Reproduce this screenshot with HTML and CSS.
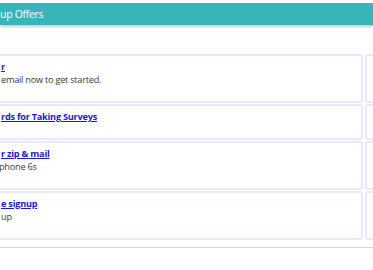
FILE: index.html
```html
<!DOCTYPE html>
<html lang="en">
  <head>
    <meta charset="UTF-8" />
    <meta name="viewport" content="width=device-width, initial-scale=1.0" />
    <title>Signup Offers</title>
    <link rel="stylesheet" href="styles.css">
  </head>
  <body>
    <div class="panel">
      <div class="panel-header">
        <h2>up Offers</h2>
      </div>

      <div class="panel-body">
        <div class="offer-row">
          <div class="offer">
            <a href="#" class="offer-title">r</a>
            <p>email now to get started.</p>
          </div>
          <div class="offer"></div>
        </div>

        <div class="offer-row">
          <div class="offer">
            <a href="#" class="offer-title">rds for Taking Surveys</a>
          </div>
          <div class="offer"></div>
        </div>

        <div class="offer-row">
          <div class="offer">
            <a href="#" class="offer-title">r zip &amp; mail</a>
            <p class="cut">phone 6s</p>
          </div>
          <div class="offer"></div>
        </div>

        <div class="offer-row">
          <div class="offer">
            <a href="#" class="offer-title">e signup</a>
            <p>up</p>
          </div>
          <div class="offer"></div>
        </div>
      </div>
    </div>
  </body>
</html>
```

FILE: styles.css
```css
* {
  margin: 0;
  padding: 0;
  box-sizing: border-box;
}

body {
  font-family: "Open Sans", "Liberation Sans", sans-serif;
  background: white;
  overflow: hidden;
}

.panel {
  padding-top: 3px;
  border-bottom: 1px solid #d4d4d4;
}

.panel-header {
  background: #38b4bb;
  height: 23px;
  display: flex;
  align-items: center;
  border-bottom: 1px solid #a9dde0;
  box-shadow: 0 3px 0 -1px #e2e2e2;
}

.panel-header h2 {
  color: white;
  font-size: 10.5px;
  font-weight: 400;
  letter-spacing: -0.3px;
}

.panel-body {
  padding: 28px 0 7px;
  display: flex;
  flex-direction: column;
  gap: 1px;
}

.offer-row {
  display: flex;
  gap: 2px;
  margin-left: -20px;
}

.offer {
  border: 2px solid #e6ebfb;
  border-radius: 3px;
  padding: 4px 0 15px 19px;
  width: 383px;
  flex-shrink: 0;
}

.offer-title {
  display: block;
  font-size: 9.2px;
  font-weight: 700;
  line-height: 13px;
  letter-spacing: -0.25px;
  color: #1a1ad2;
  text-decoration: underline;
}

.offer p {
  font-size: 9.2px;
  line-height: 13px;
  letter-spacing: -0.25px;
  color: #3a3a3a;
}

.offer p.cut {
  margin-left: -2px;
}
```
